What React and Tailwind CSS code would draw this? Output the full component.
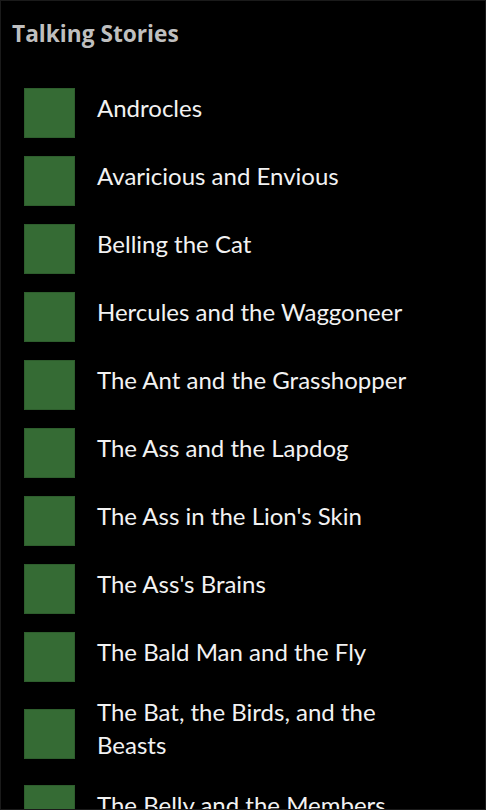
import React from "react";

const STORIES = [
  "Androcles",
  "Avaricious and Envious",
  "Belling the Cat",
  "Hercules and the Waggoneer",
  "The Ant and the Grasshopper",
  "The Ass and the Lapdog",
  "The Ass in the Lion's Skin",
  "The Ass's Brains",
  "The Bald Man and the Fly",
  "The Bat, the Birds, and the Beasts",
  "The Belly and the Members",
  "The Boy and the Filberts",
];

function StoryRow({ title }) {
  return (
    <li className="flex items-center">
      <div className="my-[9px] ml-[23px] h-[50px] w-[51px] shrink-0 border border-[#2e5e2d] bg-[#356b34]" />
      <div className="ml-[22px] w-[330px] pb-[15px] pt-[4px] text-[24px] leading-[33px] text-[#f2f2f2]">
        {title}
      </div>
    </li>
  );
}

export default function App() {
  return (
    <div
      className="h-[810px] w-[486px] overflow-hidden border border-[#1a1a1a] bg-black"
      style={{ fontFamily: 'Lato, "Noto Sans", sans-serif' }}
    >
      <h1
        className="pl-[11px] pt-[17px] text-[22.7px] font-bold leading-[32px] text-[#bfbfbf]"
        style={{ fontFamily: '"Open Sans", sans-serif' }}
      >
        Talking Stories
      </h1>
      <ul className="mt-[29px]">
        {STORIES.map((s) => (
          <StoryRow key={s} title={s} />
        ))}
      </ul>
    </div>
  );
}
